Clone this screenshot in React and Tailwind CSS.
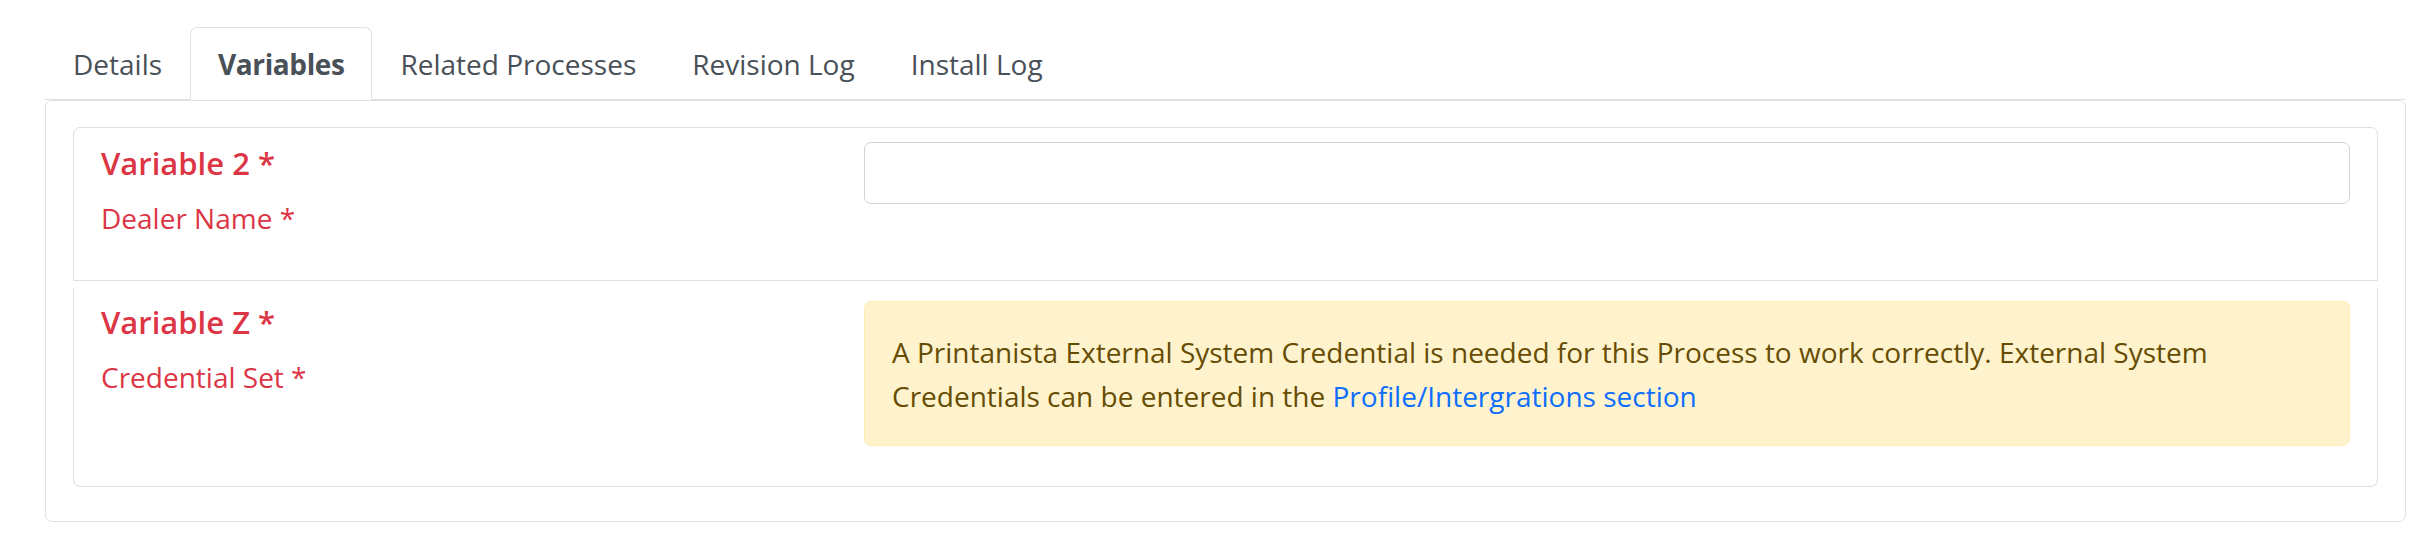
const TABS = ["Details", "Variables", "Related Processes", "Revision Log", "Install Log"];

function Tabs({ active }) {
  return (
    <ul className="flex border-b border-[#dee2e6]">
      {TABS.map((tab) => (
        <li key={tab} className="-mb-px">
          <a
            href="#"
            className={
              tab === active
                ? "block rounded-t-[7px] border border-[#dee2e6] border-b-white bg-white px-[27px] pt-[14px] pb-[13px] font-bold tracking-[-0.4px] text-[#495057]"
                : "block rounded-t-[7px] border border-transparent px-[27px] pt-[14px] pb-[13px] text-[#495057]"
            }
          >
            {tab}
          </a>
        </li>
      ))}
    </ul>
  );
}

function VariableLabel({ name, label, className = "" }) {
  return (
    <div className={"w-[763px] shrink-0 text-[#dc3545] " + className}>
      <h5 className="mb-[12px] text-[31px] font-semibold leading-[42px]">{name} *</h5>
      <label className="block">{label} *</label>
    </div>
  );
}

export default function App() {
  return (
    <div className="bg-white pt-[27px] pl-[45px] pr-[24px] font-['Open_Sans',sans-serif] text-[28px] leading-[44px] text-[#212529]">
      <Tabs active="Variables" />

      <div className="rounded-[7px] border border-[#dfdfdf] px-[27px] pt-[26px] pb-[34px]">
        {/* Variable 2 */}
        <div className="flex rounded-t-[7px] border border-[#dfdfdf] px-[27px] pt-[14px] pb-[14px]">
          <VariableLabel name="Variable 2" label="Dealer Name" className="pb-[26px]" />
          <div className="flex-1">
            <input
              type="text"
              className="block h-[62px] w-full rounded-[7px] border border-[#ced4da] bg-white px-[20px] text-[28px] outline-none"
            />
          </div>
        </div>

        {/* Variable Z */}
        <div className="mt-[7px] flex rounded-b-[7px] border border-t-0 border-[#dfdfdf] px-[27px] pt-[13px] pb-[12px]">
          <VariableLabel name="Variable Z" label="Credential Set" />
          <div className="flex-1">
            <div className="mb-[28px] rounded-[7px] border border-[#ffecb5] bg-[#fff3cd] px-[27px] pt-[28px] pb-[27px] text-[#664d03]">
              <span>
                A Printanista External System Credential is needed for this Process to work correctly. External System
              </span>
              <br />
              <span>Credentials can be entered in the </span>
              <a href="#" className="text-[#0d6efd]">
                Profile/Intergrations section
              </a>
            </div>
          </div>
        </div>
      </div>
    </div>
  );
}
